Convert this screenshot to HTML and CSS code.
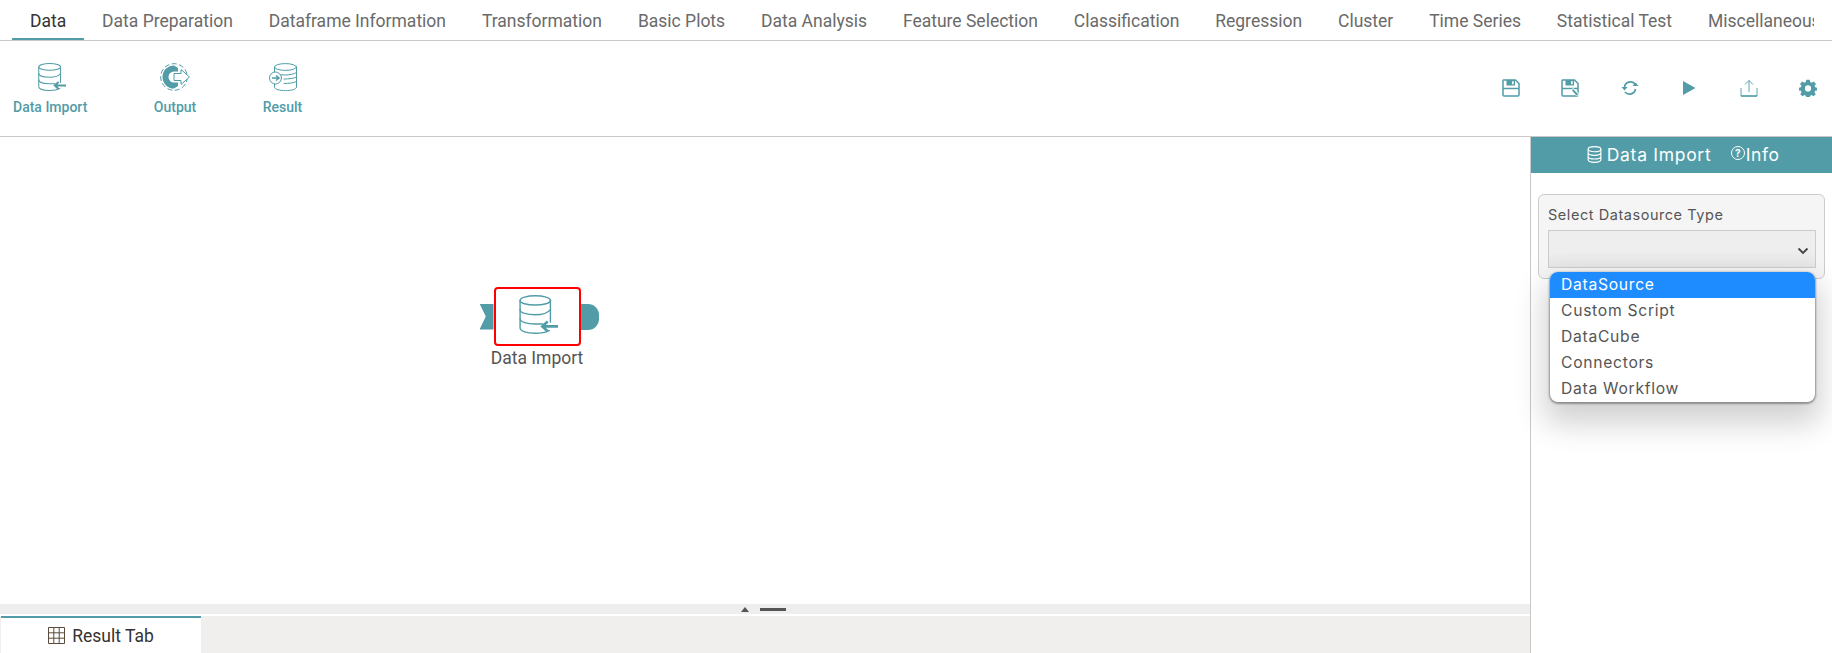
FILE: index.html
```html
<!DOCTYPE html>
<html lang="en">
<head>
<meta charset="utf-8">
<title>Data Import</title>
<link rel="stylesheet" href="styles.css">
</head>
<body>
<svg class="defs" width="0" height="0" aria-hidden="true">
  <symbol id="db-import" viewBox="0 0 36 36">
    <g fill="none" stroke="currentColor" stroke-width="1.300" stroke-linecap="round">
      <ellipse cx="15" cy="5" rx="14" ry="4.300"/>
      <path d="M1 5V30.500C1 33.500 7.500 35.300 15 35.300C20 35.300 25 34.300 28 32.800"/>
      <path d="M29 5V25"/>
      <path d="M1 13.500C1 16.500 7.500 18.300 15 18.300C21 18.300 26.500 16.800 29 13.500"/>
      <path d="M1 22C1 25 7.500 26.800 15 26.800H22"/>
    </g>
    <path d="M36 29H22.500M26.500 24.500L21.500 29L26.500 33.500" fill="none" stroke="currentColor" stroke-width="2.400"/>
  </symbol>
  <symbol id="output" viewBox="0 0 30 28">
    <circle cx="14" cy="14" r="13.300" fill="none" stroke="currentColor" stroke-width="1" stroke-dasharray="5 2.500"/>
    <path d="M14 2.500A11.500 11.500 0 1 0 14 25.500L18 23V19.500H14A5.500 5.500 0 1 1 14 8.500H18V5Z" fill="currentColor"/>
    <path d="M14 10.500H21V6.500L29.500 14L21 21.500V17.500H14Z" fill="#fff" stroke="currentColor" stroke-width="1"/>
  </symbol>
  <symbol id="result" viewBox="0 0 28 28">
    <g fill="none" stroke="currentColor" stroke-width="1" stroke-linecap="round">
      <ellipse cx="16.500" cy="4" rx="11" ry="3.400"/>
      <path d="M5.500 4V9M27.500 4V24C27.500 26.500 22 27.600 16.500 27.600C11 27.600 5.500 26.500 5.500 24V21"/>
      <path d="M7 10.500C10 11.500 13 12 16.500 12C21 12 25.500 11 27.500 9.500"/>
      <path d="M15 16C20 16 25 15.500 27.500 14"/>
      <path d="M15 20.500C20 20.500 25 20 27.500 18.500"/>
      <circle cx="6.500" cy="15" r="6" fill="#fff"/>
    </g>
    <path d="M3 15H9.500M7 12.500L10 15L7 17.500" fill="none" stroke="currentColor" stroke-width="1.500"/>
  </symbol>
  <symbol id="floppy" viewBox="0 0 18 18">
    <path d="M1.500 1H13.500L17 4.500V16A1 1 0 0 1 16 17H2A1 1 0 0 1 1 16V1.500Z" fill="none" stroke="currentColor" stroke-width="1.500"/>
    <path d="M4.500 1H13V6.500H4.500Z M10 2.300V5.200H11.700V2.300Z" fill="currentColor" fill-rule="evenodd"/>
    <path d="M1 9.500H17" stroke="currentColor" stroke-width="1.500"/>
  </symbol>
</svg>

<nav class="tabs">
  <a class="tab active">Data</a>
  <a class="tab">Data Preparation</a>
  <a class="tab">Dataframe Information</a>
  <a class="tab">Transformation</a>
  <a class="tab">Basic Plots</a>
  <a class="tab">Data Analysis</a>
  <a class="tab">Feature Selection</a>
  <a class="tab">Classification</a>
  <a class="tab">Regression</a>
  <a class="tab">Cluster</a>
  <a class="tab">Time Series</a>
  <a class="tab">Statistical Test</a>
  <a class="tab">Miscellaneous</a>
</nav>

<header class="toolbar">
  <div class="tools">
    <div class="tool"><svg class="tool-icon tool-icon-db"><use href="#db-import"/></svg><span>Data Import</span></div>
    <div class="tool"><svg class="tool-icon"><use href="#output"/></svg><span>Output</span></div>
    <div class="tool"><svg class="tool-icon"><use href="#result"/></svg><span>Result</span></div>
  </div>
  <div class="actions">
    <svg class="action"><use href="#floppy"/></svg>
    <svg class="action" viewBox="0 0 18 18">
      <use href="#floppy" width="18" height="18"/>
      <path d="M10 11L15.500 17L18 16.500L17.500 14L12 9Z" fill="#fff"/>
      <path d="M11 11.500L15.500 16.500L17 16L16.500 14.500L12 10Z" fill="currentColor"/>
    </svg>
    <svg class="action" viewBox="0 0 18 18">
      <path d="M3.500 8A6 6 0 0 1 14 5M14.500 10A6 6 0 0 1 4 13" fill="none" stroke="currentColor" stroke-width="1.700"/>
      <path d="M0.500 8H6.500L3.500 11.500ZM11.500 7H17.500L14.500 3.500Z" fill="currentColor"/>
    </svg>
    <svg class="action" viewBox="0 0 18 18"><path d="M3 2L15.500 9L3 16Z" fill="currentColor"/></svg>
    <svg class="action" viewBox="0 0 18 18">
      <path d="M1 9V17H17V9" fill="none" stroke="currentColor" stroke-width=".9"/>
      <path d="M1 17H17" stroke="currentColor" stroke-width="1.400"/>
      <path d="M9 13V1.500M5 5.500L9 1.500L13 5.500" fill="none" stroke="currentColor" stroke-width=".9"/>
    </svg>
    <svg class="action" viewBox="0 0 18 18">
      <path fill="currentColor" fill-rule="evenodd" d="M7.300 .8H10.700L11.200 3.100L12.800 3.800L14.800 2.500L17 4.900L15.600 6.800L16.200 8.300L18 8.700V11.400L16.100 11.800L15.500 13.300L16.700 15.200L14.500 17.300L12.600 16.100L11.100 16.700L10.700 18H7.300L6.900 16.700L5.400 16.100L3.500 17.300L1.300 15.200L2.500 13.300L1.900 11.800L0 11.400V8.700L1.800 8.300L2.400 6.800L1 4.900L3.200 2.500L5.200 3.800L6.800 3.100ZM9 6.300A3.100 3.100 0 1 0 9 12.500A3.100 3.100 0 1 0 9 6.300Z"/>
    </svg>
  </div>
</header>

<main class="workspace">
  <section class="left">
    <div class="canvas">
      <div class="node">
        <div class="node-row">
          <span class="port-in"></span>
          <div class="node-box"><svg class="node-icon"><use href="#db-import"/></svg></div>
          <span class="port-out"></span>
        </div>
        <div class="node-label">Data Import</div>
      </div>
    </div>
    <div class="splitter"><span class="tri"></span><span class="bar"></span></div>
    <div class="results">
      <div class="result-tab">
        <svg class="grid-icon" viewBox="0 0 17 17">
          <path d="M.5.500H16.500V16.500H.5ZM.5 5.800H16.500M.5 11.200H16.500M5.800.5V16.500M11.200.5V16.500" fill="none" stroke="#5b4a3c" stroke-width="1"/>
        </svg>
        <span>Result Tab</span>
      </div>
    </div>
  </section>

  <aside class="panel">
    <div class="panel-head">
      <svg class="head-db" viewBox="0 0 14 16">
        <g fill="none" stroke="#fff" stroke-width="1.100">
          <ellipse cx="7" cy="3" rx="6" ry="2.400"/>
          <path d="M1 3V13C1 14.500 4 15.400 7 15.400C10 15.400 13 14.500 13 13V3M1 6.400C1 8 4 8.800 7 8.800C10 8.800 13 8 13 6.400M1 9.800C1 11.400 4 12.200 7 12.200C10 12.200 13 11.400 13 9.800"/>
        </g>
      </svg>
      <span class="head-title">Data Import</span>
      <span class="help">?</span>
      <span class="head-info">Info</span>
    </div>
    <div class="panel-body">
      <div class="field">
        <label class="field-label">Select Datasource Type</label>
        <div class="select">
          <svg class="chev" viewBox="0 0 12 8"><path d="M1.500 1.500L6 6L10.500 1.500" fill="none" stroke="#444" stroke-width="1.800"/></svg>
        </div>
      </div>
      <ul class="dropdown">
        <li class="selected">DataSource</li>
        <li>Custom Script</li>
        <li>DataCube</li>
        <li>Connectors</li>
        <li>Data Workflow</li>
      </ul>
    </div>
  </aside>
</main>
</body>
</html>
```

FILE: styles.css
```css
* { box-sizing: border-box; }
html, body { margin: 0; height: 100%; }
body {
  width: 1832px;
  height: 653px;
  overflow: hidden;
  background: #fff;
  font-family: "Roboto", "Liberation Sans", sans-serif;
  display: flex;
  flex-direction: column;
  color: #666;
}
.defs { position: absolute; }

.tabs {
  height: 41px;
  flex: none;
  display: flex;
  padding-left: 12px;
  border-bottom: 1px solid #c9c9c9;
  overflow: hidden;
}
.tab {
  flex: none;
  height: 40px;
  padding: 0 17.950px;
  font-size: 17.500px;
  line-height: 42px;
  color: #6a6a6a;
  white-space: nowrap;
}
.tab:last-child {
  width: 124px;
  padding-right: 0;
  overflow: hidden;
}
.tab.active {
  color: #333;
  border-bottom: 2px solid #519ca7;
}

.toolbar {
  height: 96px;
  flex: none;
  display: flex;
  justify-content: space-between;
  border-bottom: 1px solid #c9c9c9;
}
.tools {
  display: flex;
  gap: 66.500px;
  padding: 22px 0 0 13px;
}
.tool {
  display: flex;
  flex-direction: column;
  align-items: center;
  color: #519ca7;
  font-size: 14px;
  font-weight: 500;
}
.tool-icon { width: 30px; height: 28px; margin-bottom: 8px; }
.tool-icon-db { margin-left: 3px; }
.actions {
  display: flex;
  gap: 41.500px;
  padding: 38px 15px 0 0;
  color: #519ca7;
}
.action { width: 18px; height: 18px; }

.workspace {
  flex: 1;
  display: flex;
  min-height: 0;
}
.left {
  width: 1531px;
  flex: none;
  display: flex;
  flex-direction: column;
  border-right: 1px solid #c9c9c9;
}
.canvas {
  flex: 1;
  position: relative;
}
.node {
  position: absolute;
  left: 479px;
  top: 150px;
  width: 120px;
  display: flex;
  flex-direction: column;
  align-items: center;
}
.node-row {
  display: flex;
  align-items: center;
}
.port-in {
  width: 14px;
  height: 26px;
  background: #519ca7;
  clip-path: polygon(0 0, 100% 0, 100% 100%, 0 100%, 45% 50%);
}
.port-out {
  width: 18px;
  height: 26px;
  background: #519ca7;
  border-radius: 0 11px 11px 0;
}
.node-box {
  width: 87px;
  height: 59px;
  background: #fff;
  border: 2px solid #f00;
  border-radius: 4px;
  display: flex;
  align-items: center;
  justify-content: center;
}
.node-icon { width: 39px; height: 39px; color: #519ca7; margin: 0 0 4px 2px; }
.node-label {
  margin: 2px 4px 0 0;
  font-size: 17.500px;
  line-height: 20px;
  color: #555;
  white-space: nowrap;
}

.splitter {
  height: 10px;
  flex: none;
  background: #eee;
  display: flex;
  align-items: center;
  padding-left: 741px;
  gap: 11px;
}
.tri {
  width: 0;
  height: 0;
  border-left: 4px solid transparent;
  border-right: 4px solid transparent;
  border-bottom: 5px solid #555;
}
.bar { width: 26px; height: 3px; background: #555; }

.results {
  height: 37px;
  margin-top: 2px;
  flex: none;
  background: #f1eeee;
}
.result-tab {
  width: 200px;
  height: 100%;
  margin-left: 1px;
  background: #fff;
  border-top: 2px solid #519ca7;
  display: flex;
  align-items: center;
  justify-content: center;
  gap: 7px;
  color: #333;
  font-size: 17.500px;
}
.grid-icon { width: 17px; height: 17px; }

.panel {
  flex: 1;
  position: relative;
  font-family: "Inter", "Liberation Sans", sans-serif;
}
.panel-head {
  height: 36px;
  background: #519ca7;
  color: #fff;
  font-size: 17.500px;
  display: flex;
  align-items: center;
  justify-content: center;
  padding: 0 0 2px 3.500px;
}
.head-db { width: 15px; height: 17px; margin-right: 5px; }
.head-title { margin-right: 19.500px; letter-spacing: .7px; }
.help {
  width: 14px;
  height: 14px;
  border: 1.300px solid #fff;
  border-radius: 50%;
  font-size: 10px;
  font-weight: 700;
  line-height: 12px;
  text-align: center;
  margin-right: 1px;
  margin-top: -3px;
}
.head-info { letter-spacing: .6px; }
.panel-body { padding: 21px 7px 0 7px; position: relative; }
.field {
  height: 85px;
  background: #f5f5f5;
  border: 1px solid #ccc;
  border-radius: 6px;
  padding: 11px 8px 0 9px;
}
.field-label {
  display: block;
  font-size: 14.500px;
  line-height: 18px;
  color: #555;
  margin-bottom: 6px;
  letter-spacing: .55px;
}
.select {
  height: 38px;
  background: linear-gradient(#eee, #eee 55%, #e6e6e6);
  border: 1px solid #ccc;
  display: flex;
  align-items: center;
  justify-content: flex-end;
  padding: 4px 6px 0 0;
}
.chev { width: 12px; height: 8px; }
.dropdown {
  position: absolute;
  left: 19px;
  top: 99px;
  width: 265px;
  margin: 0;
  padding: 0;
  list-style: none;
  background: #fff;
  border-radius: 8px;
  overflow: hidden;
  box-shadow: 0 1px 2px 1px rgba(0,0,0,.35), 0 16px 30px 6px rgba(0,0,0,.18);
  font-size: 15.700px;
  color: #555;
}
.dropdown li {
  height: 26px;
  line-height: 26px;
  padding-left: 11px;
  letter-spacing: .7px;
}
.dropdown li.selected {
  background: #1e8cff;
  color: #fff;
}
```
